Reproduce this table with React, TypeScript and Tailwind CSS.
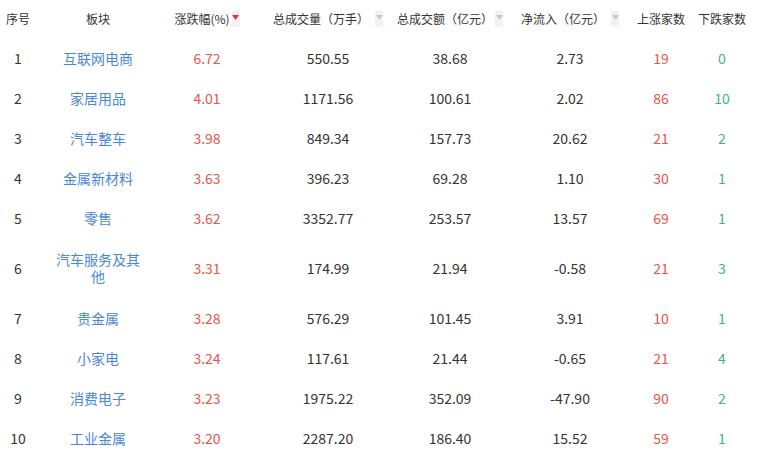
import React from 'react';

interface Row {
  no: number;
  name: string;
  pct: string;
  vol: string;
  amt: string;
  flow: string;
  up: number;
  down: number;
}

const ROWS: Row[] = [
  { no: 1, name: '互联网电商', pct: '6.72', vol: '550.55', amt: '38.68', flow: '2.73', up: 19, down: 0 },
  { no: 2, name: '家居用品', pct: '4.01', vol: '1171.56', amt: '100.61', flow: '2.02', up: 86, down: 10 },
  { no: 3, name: '汽车整车', pct: '3.98', vol: '849.34', amt: '157.73', flow: '20.62', up: 21, down: 2 },
  { no: 4, name: '金属新材料', pct: '3.63', vol: '396.23', amt: '69.28', flow: '1.10', up: 30, down: 1 },
  { no: 5, name: '零售', pct: '3.62', vol: '3352.77', amt: '253.57', flow: '13.57', up: 69, down: 1 },
  { no: 6, name: '汽车服务及其他', pct: '3.31', vol: '174.99', amt: '21.94', flow: '-0.58', up: 21, down: 3 },
  { no: 7, name: '贵金属', pct: '3.28', vol: '576.29', amt: '101.45', flow: '3.91', up: 10, down: 1 },
  { no: 8, name: '小家电', pct: '3.24', vol: '117.61', amt: '21.44', flow: '-0.65', up: 21, down: 4 },
  { no: 9, name: '消费电子', pct: '3.23', vol: '1975.22', amt: '352.09', flow: '-47.90', up: 90, down: 2 },
  { no: 10, name: '工业金属', pct: '3.20', vol: '2287.20', amt: '186.40', flow: '15.52', up: 59, down: 1 },
];

// column boxes: width + left offset so centres line up with the table
const C1 = 'w-[36px] shrink-0 text-center';
const C2 = 'w-[120px] ml-[2px] px-[14px] shrink-0 text-center';
const C3 = 'w-[90px] ml-[4px] shrink-0 text-center';
const C4 = 'w-[136px] ml-[8px] shrink-0 text-center';
const C5 = 'w-[106px] ml-[1px] shrink-0 text-center';
const C6 = 'w-[100px] ml-[17px] shrink-0 text-center';
const C7 = 'w-[54px] ml-[14px] shrink-0 text-center';
const C8 = 'w-[54px] ml-[7px] shrink-0 text-center';

const SortIcon = ({ active }: { active?: boolean }) => (
  <span className="inline-flex w-[8px] h-[16px] bg-[#f2f2f2] items-start justify-center pt-[4px]">
    <svg width="7" height="5" viewBox="0 0 7 5">
      <path d="M0 0 L7 0 L3.5 5 Z" fill={active ? '#e5343b' : '#c8c8c8'} />
    </svg>
  </span>
);

export default function App() {
  return (
    <div className="w-[759px] h-[458px] bg-white overflow-hidden text-[#333] font-['Microsoft_YaHei','Noto_Sans_CJK_SC',sans-serif]">
      <div className="flex items-center h-[38px] text-[12px] text-[#333]">
        <div className={C1}>序号</div>
        <div className={C2}>板块</div>
        <div className={`${C3} flex items-center justify-center gap-[2px]`}>
          <span>涨跌幅(%)</span>
          <SortIcon active />
        </div>
        <div className={`${C4} flex items-center justify-center gap-[6px]`}>
          <span>总成交量（万手）</span>
          <SortIcon />
        </div>
        <div className={`${C5} flex items-center justify-center gap-[6px]`}>
          <span>总成交额（亿元）</span>
          <SortIcon />
        </div>
        <div className={`${C6} flex items-center justify-center gap-[6px]`}>
          <span>净流入（亿元）</span>
          <SortIcon />
        </div>
        <div className={C7}>上涨家数</div>
        <div className={C8}>下跌家数</div>
      </div>
      {ROWS.map(r => (
        <div
          key={r.no}
          className={`flex items-center text-[14px] ${r.name.length > 6 ? 'h-[60px]' : 'h-[40px]'}`}
        >
          <div className={C1}>{r.no}</div>
          <div className={`${C2} text-[#4a87d9] leading-[17px]`}>{r.name}</div>
          <div className={`${C3} text-[#e8554a]`}>{r.pct}</div>
          <div className={C4}>{r.vol}</div>
          <div className={C5}>{r.amt}</div>
          <div className={C6}>{r.flow}</div>
          <div className={`${C7} text-[#e8554a]`}>{r.up}</div>
          <div className={`${C8} text-[#3cb58a]`}>{r.down}</div>
        </div>
      ))}
    </div>
  );
}
